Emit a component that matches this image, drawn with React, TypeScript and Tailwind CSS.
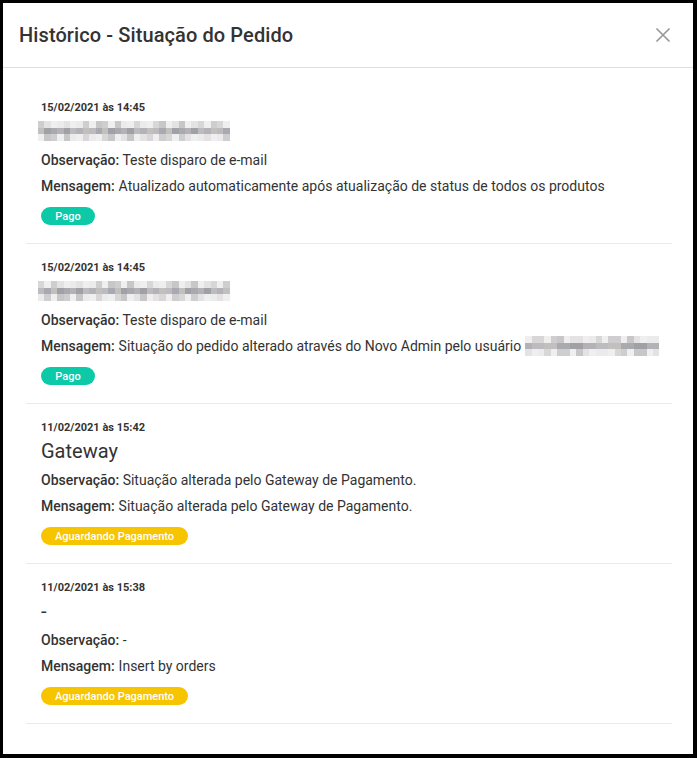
import React from 'react';

type Status = 'pago' | 'aguardando';

interface HistoryEntry {
  date: string;
  author: string | null; // null = blurred name
  blurSeed: number;
  observacao: string;
  mensagem: string;
  mensagemBlur?: boolean;
  status: Status;
}

const entries: HistoryEntry[] = [
  {
    date: '15/02/2021 às 14:45',
    author: null,
    blurSeed: 1,
    observacao: 'Teste disparo de e-mail',
    mensagem: 'Atualizado automaticamente após atualização de status de todos os produtos',
    status: 'pago',
  },
  {
    date: '15/02/2021 às 14:45',
    author: null,
    blurSeed: 2,
    observacao: 'Teste disparo de e-mail',
    mensagem: 'Situação do pedido alterado através do Novo Admin pelo usuário',
    mensagemBlur: true,
    status: 'pago',
  },
  {
    date: '11/02/2021 às 15:42',
    author: 'Gateway',
    blurSeed: 0,
    observacao: 'Situação alterada pelo Gateway de Pagamento.',
    mensagem: 'Situação alterada pelo Gateway de Pagamento.',
    status: 'aguardando',
  },
  {
    date: '11/02/2021 às 15:38',
    author: '-',
    blurSeed: 0,
    observacao: '-',
    mensagem: 'Insert by orders',
    status: 'aguardando',
  },
];

const shades = ['#c9c6c8', '#b4b2b6', '#d8d6d6', '#a9aab0', '#e4e2e2', '#bcbcc0', '#cfcdd0', '#9fa1a6', '#ecebeb', '#c2c0bf'];

// pixelated block standing in for a censored name
const Blur: React.FC<{ seed: number; cols: number }> = ({ seed, cols }) => {
  const rows = [0, 1, 2];
  return (
    <div className="flex flex-col shrink-0">
      {rows.map((r) => (
        <div key={r} className="flex">
          {Array.from({ length: cols }, (_, c) => {
            const v = (c * 7 + r * 13 + seed * 5 + ((c * c + seed) % 4)) % shades.length;
            const faint = (r === 0 || r === 2) && (c + seed + r) % 3 === 0;
            return (
              <div
                key={c}
                className="w-[6.4px] h-[6.5px]"
                style={{ backgroundColor: faint ? '#efeff0' : shades[v] }}
              />
            );
          })}
        </div>
      ))}
    </div>
  );
};

const Badge: React.FC<{ status: Status }> = ({ status }) =>
  status === 'pago' ? (
    <span className="inline-flex items-center justify-center h-[18px] w-[54px] rounded-full bg-[#0cc9a8] text-white text-[11px] font-medium leading-none">
      Pago
    </span>
  ) : (
    <span className="inline-flex items-center justify-center h-[18px] w-[147px] rounded-full bg-[#f6c500] text-white text-[11px] font-medium leading-none">
      Aguardando Pagamento
    </span>
  );

export default function App() {
  return (
    <div className="w-[697px] h-[758px] bg-black pt-[3px] pl-[3px] pr-[4px] pb-[4px] font-['Roboto',sans-serif] text-[#333]">
      <div className="bg-white h-full flex flex-col">
        <div className="h-[65px] flex items-center justify-between pl-4 pr-5 border-b border-[#dedede]">
          <h1 className="text-[20px] font-medium leading-none pb-[1px] tracking-[0.1px]">Histórico - Situação do Pedido</h1>
          <button className="text-[#999] mr-[2px]">
            <svg width="16" height="16" viewBox="0 0 16 16" fill="none" stroke="currentColor" strokeWidth="1.7">
              <path d="M1.5 1.5L14.5 14.5M14.5 1.5L1.5 14.5" />
            </svg>
          </button>
        </div>
        <div className="ml-[23px] mr-[21px] pt-4">
          {entries.map((e, i) => (
            <div key={i} className="px-[15px] pt-4 pb-[18px] border-b border-[#ebebeb]">
              <div className="text-[11px] font-bold leading-4">{e.date}</div>
              <div className="mt-[3px] h-6 flex items-center">
                {e.author === null ? (
                  <div className="-ml-[3px]">
                    <Blur seed={e.blurSeed} cols={30} />
                  </div>
                ) : (
                  <span className="text-[20px] leading-6">{e.author}</span>
                )}
              </div>
              <div className="mt-[7px] text-[14px] leading-5 whitespace-nowrap">
                <span className="font-medium">Observação:</span> {e.observacao}
              </div>
              <div className="mt-[6px] text-[14px] leading-5 flex items-center whitespace-nowrap">
                <span className="font-medium">Mensagem:</span>
                <span className="ml-1">{e.mensagem}</span>
                {e.mensagemBlur && (
                  <span className="ml-1">
                    <Blur seed={3} cols={21} />
                  </span>
                )}
              </div>
              <div className="mt-[11px] h-[18px] flex">
                <Badge status={e.status} />
              </div>
            </div>
          ))}
        </div>
      </div>
    </div>
  );
}
